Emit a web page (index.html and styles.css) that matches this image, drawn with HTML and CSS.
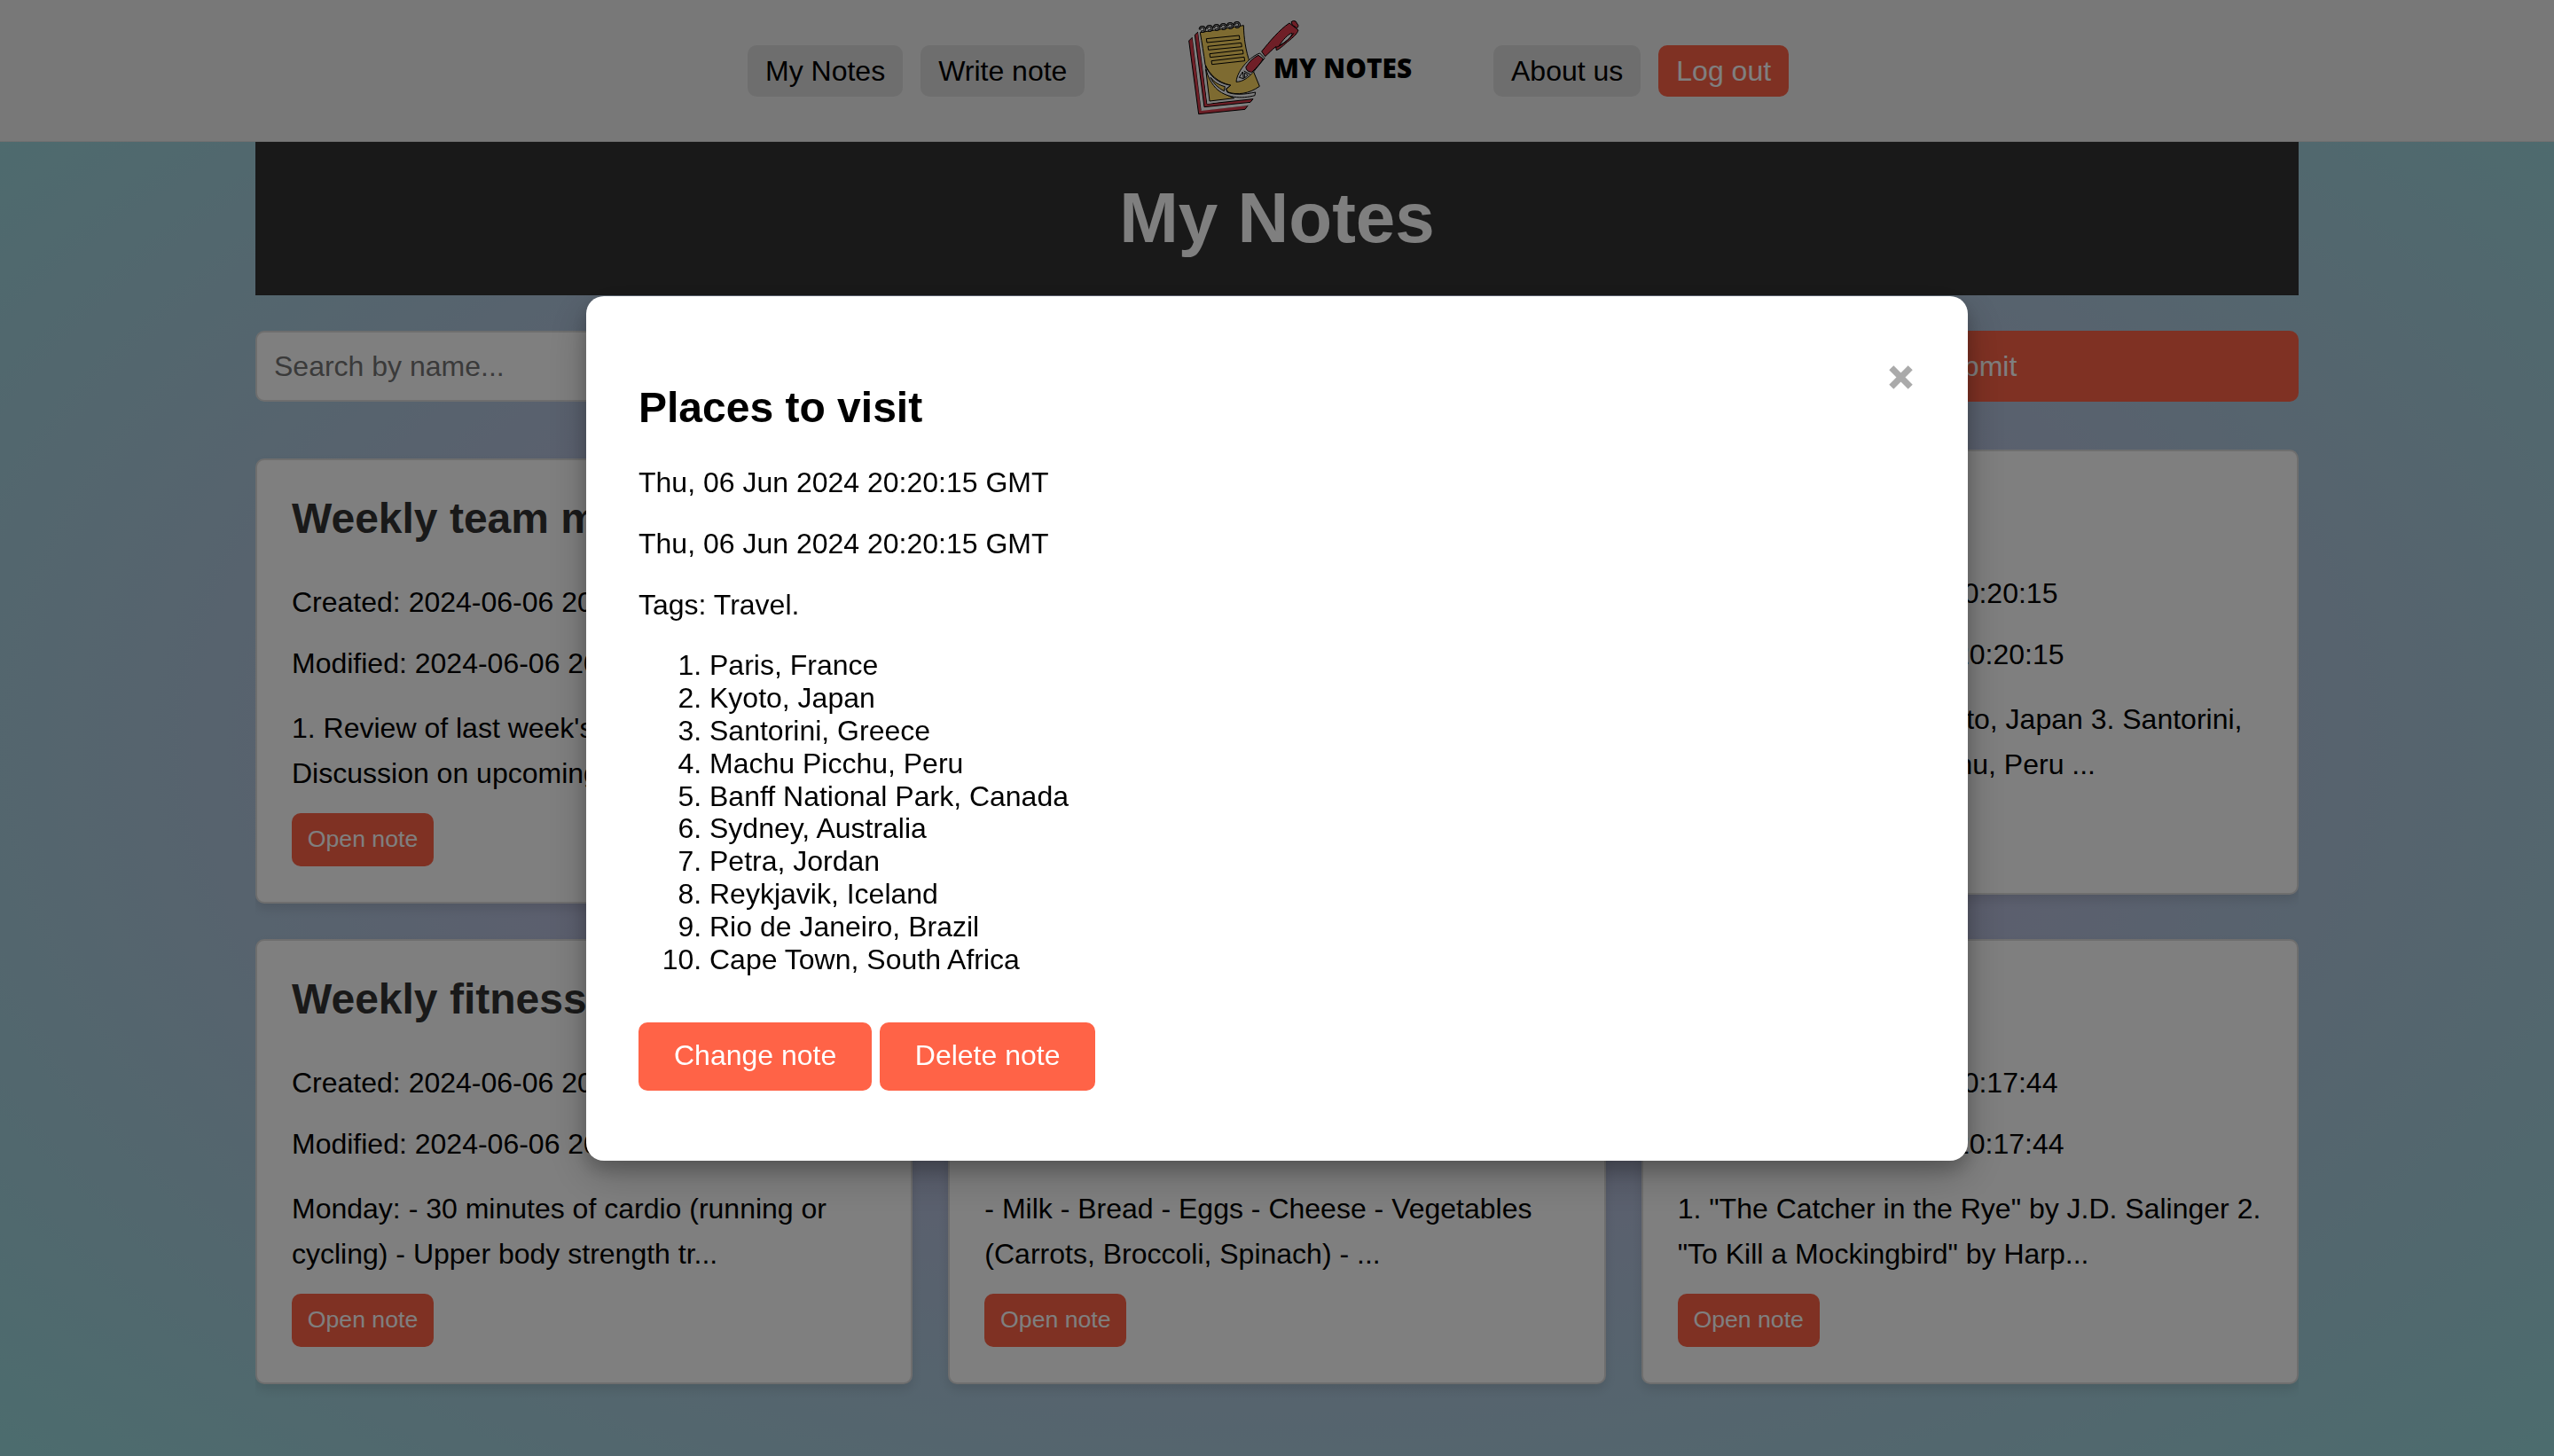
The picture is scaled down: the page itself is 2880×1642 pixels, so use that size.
FILE: index.html
```
<!DOCTYPE html>
<html lang="en">
<head>
<meta charset="utf-8">
<title>My Notes</title>
<link rel="stylesheet" href="styles.css">
</head>
<body>
<header class="header">
  <nav class="nav nav-left"><a class="nav-link">My Notes</a><a class="nav-link">Write note</a></nav>
  <div class="logo">
    <svg class="logo-art" viewBox="0 0 900 480" width="300" height="160">
      <g stroke="#000" stroke-width="3" stroke-linejoin="round">
        <path fill="#de3e4e" d="M62 138L74 126 104 372 262 356 252 370 95 386z"/>
        <path fill="#fff" d="M74 126L84 115 112 362 270 345 262 357 104 375z" stroke="none"/>
        <path fill="#de3e4e" d="M82 118L93 108 123 352 279 335 270 346 114 362z"/>
        <path fill="#fff" d="M93 107L101 98 132 342 287 312 285 323 124 352z" stroke="none"/>
        <path fill="#fcd662" d="M119 235L132 342 215 332C170 315 140 290 119 235z"/>
        <path fill="#fcd662" d="M100 110L247 86C248 130 254 170 268 212L301 292C265 318 225 322 195 312L188 302 203 288C160 280 130 250 117 218 112 180 106 145 100 110z"/>
        <path fill="#fff" d="M118 222C132 255 155 280 203 289L187 301 192 312C215 322 250 320 287 312L285 323C240 335 185 332 152 297 134 277 122 252 118 222z"/>
        <path fill="#fcd662" d="M135 262C150 280 165 288 184 293L181 308C160 297 145 283 135 262z"/>
        <path fill="#fcd662" d="M121 131L232 120 234 133 123 144zM126 157L239 145 241 158 128 169zM132 182L244 169 246 182 134 194zM138 206L249 193 251 206 140 218z"/>
        <g fill="none" stroke-width="8" stroke-linecap="round">
          <path id="rings" d="M99 97c3-9 16-8 17 2 0 6-5 9-10 8M123 94c3-9 16-8 17 2 0 6-5 9-10 8M147 91c3-9 16-8 17 2 0 6-5 9-10 8M170 88c3-9 16-8 17 2 0 6-5 9-10 8M193 85c3-9 16-8 17 2 0 6-5 9-10 8M216 82c3-9 16-8 17 2 0 6-5 9-10 8"/>
          <use href="#rings" stroke="#fff" stroke-width="2"/>
        </g>
        <path fill="#fff" d="M302 180C275 188 225 235 222 277 245 277 262 262 278 246L318 197z"/>
        <path fill="none" d="M248 240L270 252M232 262L244 243 247 266zM250 246L262 254 250 264z"/>
        <path fill="#de3e4e" d="M255 226C265 210 280 195 297 187L313 199C305 214 290 230 275 244 265 244 254 238 255 226z"/>
        <path fill="#de3e4e" d="M308 174C334 142 368 100 402 78L432 102C428 116 412 128 400 138 385 150 370 166 358 170L356 158C343 168 330 182 320 191z"/>
        <path fill="#fff" d="M368 154C380 134 398 115 411 112 413 119 395 140 368 154z"/>
        <path fill="none" d="M356 160C370 158 404 132 417 112"/>
        <path fill="#de3e4e" d="M408 74q7-6 15-2l9 14q0 6-4 9l-16-10z"/>
      </g>
    </svg>
    <span class="logo-text">MY NOTES</span>
  </div>
  <nav class="nav"><a class="nav-link">About us</a><a class="nav-link nav-primary">Log out</a></nav>
</header>
<main class="page">
  <h1 class="title">My Notes</h1>
  <form class="search">
    <input class="search-input" type="text" placeholder="Search by name...">
    <button class="submit" type="button">Submit</button>
  </form>
  <section class="notes">
    <article class="note note-first"><h2 class="note-title">Weekly team meeting</h2><p class="meta">Created: 2024-06-06 20:20:15</p><p class="meta">Modified: 2024-06-06 20:20:15</p><p class="excerpt">1. Review of last week's tasks 2.<br>Discussion on upcoming ...</p><button class="open">Open note</button></article>
    <article class="note"></article>
    <article class="note"><h2 class="note-title">Places to visit</h2><p class="meta">Created: 2024-06-06 20:20:15</p><p class="meta">Modified: 2024-06-06 20:20:15</p><p class="excerpt">1. Paris, France 2. Kyoto, Japan 3. Santorini,<br>Greece 4. Machu Picchu, Peru ...</p><button class="open">Open note</button></article>
    <article class="note"><h2 class="note-title">Weekly fitness plan</h2><p class="meta">Created: 2024-06-06 20:17:44</p><p class="meta">Modified: 2024-06-06 20:17:44</p><p class="excerpt">Monday: - 30 minutes of cardio (running or<br>cycling) - Upper body strength tr...</p><button class="open">Open note</button></article>
    <article class="note"><h2 class="note-title">Groceries</h2><p class="meta">Created: 2024-06-06 20:17:44</p><p class="meta">Modified: 2024-06-06 20:17:44</p><p class="excerpt">- Milk - Bread - Eggs - Cheese - Vegetables<br>(Carrots, Broccoli, Spinach) - ...</p><button class="open">Open note</button></article>
    <article class="note"><h2 class="note-title">Books</h2><p class="meta">Created: 2024-06-06 20:17:44</p><p class="meta">Modified: 2024-06-06 20:17:44</p><p class="excerpt">1. "The Catcher in the Rye" by J.D. Salinger 2.<br>"To Kill a Mockingbird" by Harp...</p><button class="open">Open note</button></article>
  </section>
</main>
<div class="overlay">
  <section class="modal">
    <svg class="close" viewBox="0 0 27 27" width="27" height="27"><path d="M2.800 2.800L24.200 24.200M24.200 2.800L2.800 24.200" stroke="#aaa" stroke-width="7.200"/></svg>
    <h2 class="modal-title">Places to visit</h2>
    <p class="modal-text">Thu, 06 Jun 2024 20:20:15 GMT</p>
    <p class="modal-text">Thu, 06 Jun 2024 20:20:15 GMT</p>
    <p class="modal-text">Tags: Travel.</p>
    <ol class="places">
      <li>Paris, France</li><li>Kyoto, Japan</li><li>Santorini, Greece</li><li>Machu Picchu, Peru</li><li>Banff National Park, Canada</li><li>Sydney, Australia</li><li>Petra, Jordan</li><li>Reykjavik, Iceland</li><li>Rio de Janeiro, Brazil</li><li>Cape Town, South Africa</li>
    </ol>
    <div class="actions"><button class="action">Change note</button><button class="action">Delete note</button></div>
  </section>
</div>
</body>
</html>
```
FILE: styles.css
```
* { box-sizing: border-box; }
body {
  margin: 0;
  height: 1642px;
  overflow: hidden;
  font: 32px/36.8px "Liberation Sans", Arial, sans-serif;
  color: #000;
  background: radial-gradient(ellipse at center, #d0aadd 0%, #97dadc 100%) 0 0 / 100% 1682px no-repeat;
}
button { border: 0; font-family: inherit; color: #fff; background: #ff6347; }

.header {
  display: flex;
  height: 160px;
  padding-left: 843px;
  background: #f1f1f1;
  border-bottom: 1px solid #e0e0e0;
}
.nav { display: flex; gap: 20px; padding-top: 51px; }
.nav-left { width: 477px; }
.nav-link { height: 58px; padding: 11px 20px 0; border-radius: 10px; background: #ddd; }
.nav-primary { background: #ff6347; color: #fff; }
.logo { position: relative; width: 364px; }
.logo-text { position: absolute; left: 116px; top: 56px; font: 800 29.8px/42px "Open Sans", sans-serif; white-space: nowrap; }

.page { width: 2304px; margin: 0 auto; }
.title {
  height: 173px;
  margin: 0;
  padding-top: 40px;
  text-align: center;
  font-size: 80px;
  line-height: 92px;
  color: #fff;
  background: #333;
}
.search { display: flex; justify-content: space-between; margin-top: 40px; }
.search-input { width: 1530px; height: 80px; padding: 0 19px; border: 2px solid #ddd; border-radius: 10px; font: inherit; }
.search-input::placeholder { color: #757575; }
.submit { width: 735px; height: 80px; border-radius: 10px; font-size: 32px; }

.notes {
  display: grid;
  grid-template-columns: repeat(3, 1fr);
  gap: 40px;
  align-items: start;
  margin-top: 54px;
  clip-path: inset(0 0 -40px 0);
}
.note {
  height: 502px;
  padding: 38px 39px 0;
  border: 2px solid #ddd;
  border-radius: 10px;
  background: #fff;
  box-shadow: 0 6px 12px rgba(0, 0, 0, .1);
}
.note-first { margin-top: 10px; }
.note-title { margin: 0 0 48.500px; font-size: 48px; line-height: 55px; color: #333; }
.meta { margin: 0 0 33px; }
.excerpt { margin: -4.500px 0 17.5px; line-height: 51.8px; white-space: nowrap; }
.open { display: block; width: 160px; height: 60px; padding-bottom: 2px; border-radius: 10px; font-size: 26.67px; }

.overlay { position: fixed; inset: 0; display: flex; align-items: flex-start; justify-content: center; padding-top: 334px; background: rgba(0, 0, 0, .5); }
.modal {
  position: relative;
  width: 1558px;
  height: 975px;
  padding: 97.6px 59px 0;
  border-radius: 20px;
  background: #fff;
  box-shadow: 0 10px 20px rgba(0, 0, 0, .2), 0 16px 48px rgba(0, 0, 0, .22);
}
.modal-title { margin: 0 0 39.3px; font-size: 48px; line-height: 55.2px; }
.modal-text { margin: 0 0 32px; }
.places { margin: 0; padding-left: 80px; }
.close { position: absolute; right: 62px; top: 78px; }
.actions { display: flex; gap: 8.500px; margin-top: 52.6px; }
.action { height: 77px; padding: 0 40px 2px; border-radius: 10px; font-size: 32px; }
```
